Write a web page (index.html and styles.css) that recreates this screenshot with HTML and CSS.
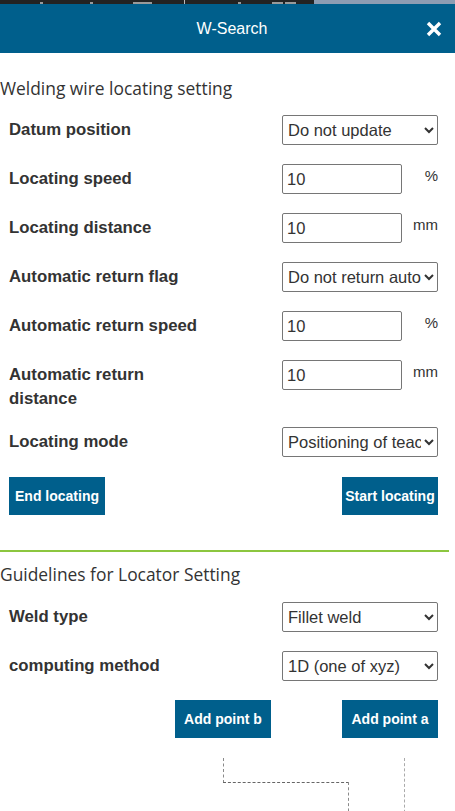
FILE: index.html
```html
<!DOCTYPE html>
<html>
<head>
<meta charset="utf-8">
<link rel="stylesheet" href="styles.css">
</head>
<body>
<div class="topstrip">
  <div class="strip-dark">
    <span class="ti t1"></span><span class="ti t2"></span><span class="ti t3"></span>
    <span class="sep"></span>
    <span class="ti t4"></span><span class="ti t5"></span><span class="ti t6"></span>
  </div>
  <div class="strip-light"></div>
</div>
<header class="header">
  <div class="title">W-Search</div>
  <button class="close" aria-label="close">
    <svg width="16" height="16" viewBox="0 0 16 16"><path d="M2 2 L14 14 M14 2 L2 14" stroke="#fff" stroke-width="3.4" stroke-linecap="butt"/></svg>
  </button>
</header>
<main class="content">
  <h2 class="section-title first">Welding wire locating setting</h2>
  <div class="rows">
    <div class="row">
      <div class="label">Datum position</div>
      <select class="sel"><option>Do not update</option></select>
    </div>
    <div class="row">
      <div class="label">Locating speed</div>
      <input class="inp" value="10"><span class="unit">%</span>
    </div>
    <div class="row">
      <div class="label">Locating distance</div>
      <input class="inp" value="10"><span class="unit">mm</span>
    </div>
    <div class="row">
      <div class="label">Automatic return flag</div>
      <select class="sel"><option>Do not return automatically</option></select>
    </div>
    <div class="row">
      <div class="label">Automatic return speed</div>
      <input class="inp" value="10"><span class="unit">%</span>
    </div>
    <div class="row">
      <div class="label narrow">Automatic return distance</div>
      <input class="inp" value="10"><span class="unit">mm</span>
    </div>
    <div class="row">
      <div class="label">Locating mode</div>
      <select class="sel"><option>Positioning of teaching point</option></select>
    </div>
    <div class="btnrow">
      <button class="btn">End locating</button>
      <button class="btn">Start locating</button>
    </div>
  </div>
  <hr class="divider">
  <h2 class="section-title">Guidelines for Locator Setting</h2>
  <div class="rows rows2">
    <div class="row">
      <div class="label">Weld type</div>
      <select class="sel"><option>Fillet weld</option></select>
    </div>
    <div class="row">
      <div class="label">computing method</div>
      <select class="sel"><option>1D (one of xyz)</option></select>
    </div>
    <div class="btnrow right">
      <button class="btn">Add point b</button>
      <button class="btn">Add point a</button>
    </div>
  </div>
  <div class="diagram">
    <span class="dl v1"></span>
    <span class="dl h1"></span>
    <span class="dl v2"></span>
    <span class="dl v3"></span>
  </div>
</main>
</body>
</html>
```
FILE: styles.css
```css
* { box-sizing: border-box; }
html, body { margin: 0; padding: 0; background: #fff; }
body { font-family: "Liberation Sans", Arial, sans-serif; color: #333; width: 455px; overflow: hidden; }

.topstrip { display: flex; height: 4px; }
.strip-dark { width: 314px; background: #232323; position: relative; display: flex; align-items: flex-end; }
.strip-light { flex: 1; background: #8d9db3; }
.ti { display: block; height: 2px; background: #9a9a9a; margin-left: 0; position: absolute; bottom: 0; }
.t1 { left: 40px; width: 3px; }
.t2 { left: 90px; width: 3px; }
.t3 { left: 133px; width: 19px; }
.t4 { left: 238px; width: 3px; }
.t5 { left: 272px; width: 11px; }
.t6 { left: 285px; width: 11px; }
.sep { position: absolute; left: 184px; top: 0; width: 1px; height: 4px; background: #bbb; }

.header { height: 49px; background: #005f8c; display: flex; align-items: center; justify-content: center; position: relative; padding-left: 9px; }
.title { color: #fff; font-size: 16px; font-family: "Liberation Sans", Arial, sans-serif; }
.close { position: absolute; right: 12px; top: 16px; width: 18px; height: 18px; padding: 0; border: 0; background: transparent; display: flex; align-items: center; justify-content: center; }

.content { width: 449px; }
.section-title { margin: 0; font-weight: normal; font-family: "Open Sans", "Noto Sans", sans-serif; font-size: 17.4px; color: #333; line-height: 24px; }
.section-title.first { padding-top: 23px; }

.rows { display: flex; flex-direction: column; gap: 19px; padding: 15px 11px 0 9px; }
.rows2 { padding-top: 16px; }
.row { display: flex; align-items: flex-start; }
.label { width: 273px; font-weight: bold; font-size: 16.75px; line-height: 24px; color: #333; padding-top: 3px; }
.label.narrow { width: 273px; padding-right: 100px; margin-bottom: -3px; }
.sel { width: 156px; height: 30px; font-family: "Liberation Sans", Arial, sans-serif; font-size: 16.5px; color: #333; padding: 0 0 0 1px; border: 1px solid #767676; border-radius: 2px; background: #fff; }
.inp { width: 120px; height: 30px; font-family: "Liberation Sans", Arial, sans-serif; font-size: 16.5px; color: #333; padding: 0 4px; border: 1px solid #767676; border-radius: 2px; outline: none; }
.unit { flex: 1; text-align: right; font-size: 15px; line-height: 24px; color: #333; margin-top: 0; }

.btnrow { display: flex; justify-content: space-between; padding-top: 1px; }
.btnrow.right { justify-content: flex-end; gap: 71px; padding-top: 0; }
.btn { height: 38px; padding: 0 3px; background: #005f8c; color: #fff; border: 0; border-radius: 0; font-family: "Liberation Sans", Arial, sans-serif; font-weight: bold; font-size: 14px; min-width: 96px; }

.divider { margin: 35px 0 10px; border: 0; height: 2px; background: #8cc63f; }

.diagram { position: relative; height: 75px; }
.dl { position: absolute; }
.v1 { left: 223px; top: 20px; height: 25px; border-left: 1px dashed #8a8a8a; }
.h1 { left: 223px; top: 44px; width: 126px; border-top: 1px dashed #666; }
.v2 { left: 348px; top: 44px; height: 40px; border-left: 1px dashed #8a8a8a; }
.v3 { left: 404px; top: 20px; height: 60px; border-left: 1px dashed #aaa; }
```
